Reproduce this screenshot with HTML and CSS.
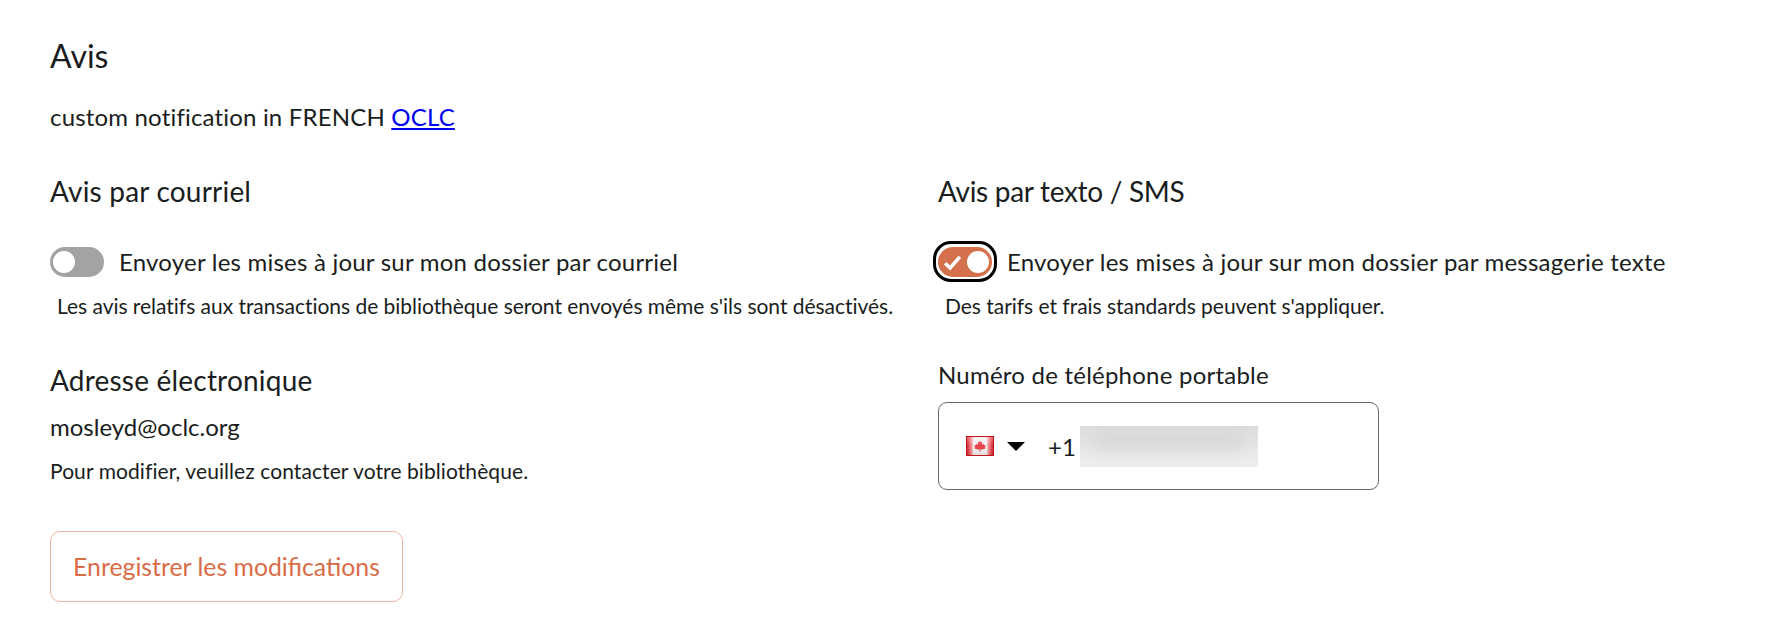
FILE: index.html
```html
<!DOCTYPE html>
<html lang="fr">
<head>
<meta charset="utf-8">
<title>Avis</title>
<link rel="stylesheet" href="styles.css">
</head>
<body>
<main class="page">
  <h2 class="title">Avis</h2>
  <p class="custom">custom notification in FRENCH <a href="#">OCLC</a></p>
  <div class="columns">
    <section class="col">
      <h3 class="subtitle">Avis par courriel</h3>
      <div class="toggle-row">
        <span class="switch-wrap"><span class="switch off"><span class="knob"></span></span></span>
        <span class="toggle-label">Envoyer les mises à jour sur mon dossier par courriel</span>
      </div>
      <p class="note">Les avis relatifs aux transactions de bibliothèque seront envoyés même s'ils sont désactivés.</p>
      <h3 class="subtitle address">Adresse électronique</h3>
      <p class="email">mosleyd@oclc.org</p>
      <p class="hint">Pour modifier, veuillez contacter votre bibliothèque.</p>
      <button class="save" type="button">Enregistrer les modifications</button>
    </section>
    <section class="col">
      <h3 class="subtitle sms">Avis par texto / SMS</h3>
      <div class="toggle-row">
        <span class="switch-wrap focus"><span class="switch on">
          <svg class="check" viewBox="0 0 16 14" aria-hidden="true"><path d="M1.8 7.6 6 11.6 14.2 2.2" fill="none" stroke="#fff" stroke-width="3"/></svg>
          <span class="knob"></span></span></span>
        <span class="toggle-label">Envoyer les mises à jour sur mon dossier par messagerie texte</span>
      </div>
      <p class="note">Des tarifs et frais standards peuvent s'appliquer.</p>
      <label class="phone-label">Numéro de téléphone portable</label>
      <div class="phone">
        <svg class="flag" viewBox="0 0 28 20" aria-hidden="true">
          <defs>
            <linearGradient id="shade" x1="0" y1="0" x2="0" y2="1"><stop offset="0" stop-color="#fff" stop-opacity=".3"/><stop offset=".5" stop-color="#fff" stop-opacity="0"/><stop offset="1" stop-color="#000" stop-opacity=".1"/></linearGradient>
            <linearGradient id="band" x1="0" y1="0" x2="1" y2="0"><stop offset="0" stop-color="#c9141f"/><stop offset=".6" stop-color="#ef6a70"/><stop offset="1" stop-color="#f6c4c6"/></linearGradient>
            <linearGradient id="bandr" x1="1" y1="0" x2="0" y2="0"><stop offset="0" stop-color="#c9141f"/><stop offset=".6" stop-color="#ef6a70"/><stop offset="1" stop-color="#f6c4c6"/></linearGradient>
          </defs>
          <rect width="28" height="20" fill="#f4eeee"/>
          <rect width="7" height="20" fill="url(#band)"/>
          <rect x="21" width="7" height="20" fill="url(#bandr)"/>
          <path d="M14 4.5 15 6.6 16.4 6 16 9 17.6 8 18.6 9.6 19.8 9.4 19 11.6 19.6 12.4 16 13.6 14.4 13.4 14.4 16 13.6 16 13.6 13.4 12 13.6 8.4 12.4 9 11.6 8.2 9.4 9.4 9.6 10.4 8 12 9 11.6 6 13 6.6Z" fill="#e8404a"/>
          <rect width="28" height="20" fill="url(#shade)"/>
          <rect x=".5" y=".5" width="27" height="19" fill="none" stroke="#c0141f"/>
        </svg>
        <span class="caret"></span>
        <span class="dial">+1</span>
        <span class="blurred"><span class="smear"></span></span>
      </div>
    </section>
  </div>
</main>
</body>
</html>
```
FILE: styles.css
```css
* { box-sizing: border-box; }
html, body { margin: 0; background: #fff; }
body { font-family: "Lato", "Liberation Sans", sans-serif; color: #1a1d20; }
.page { padding: 34px 50px 0; }
.title { margin: 0; font-size: 32px; font-weight: 400; line-height: 44px; }
.custom { margin: 23px 0 0; font-size: 24px; line-height: 32px; letter-spacing: .18px; }
.custom a { color: #0000ee; text-decoration: underline; }
.columns { display: grid; grid-template-columns: 888px 1fr; margin-top: 40px; }
.col { min-width: 0; display: flex; flex-direction: column; align-items: flex-start; }
.subtitle { margin: 0; font-size: 28px; font-weight: 400; line-height: 36px; letter-spacing: .2px; }
.subtitle.sms { letter-spacing: -.3px; }
.toggle-row { display: flex; align-items: center; margin-top: 38px; height: 30px; }
.switch-wrap { display: block; width: 54px; height: 30px; flex: none; margin-right: 15px; position: relative; }
.switch { display: block; width: 54px; height: 30px; border-radius: 15px; position: relative; }
.switch.off { background: #a3a3a3; }
.switch.on { background: #d4704c; }
.knob { position: absolute; top: 4px; width: 22px; height: 22px; border-radius: 50%; background: #fff; }
.off .knob { left: 3px; }
.on .knob { right: 3px; }
.focus::after { content: ""; position: absolute; inset: -6px -5px -5px -5px; border: 3px solid #000; border-radius: 18px; }
.check { position: absolute; left: 5px; top: 7px; width: 19px; height: 17px; }
.toggle-label { font-size: 24px; line-height: 30px; letter-spacing: .22px; }
.note { margin: 14px 0 0 7px; font-size: 21px; line-height: 30px; letter-spacing: -.03px; }
.address { margin-top: 41px; }
.email { margin: 14px 0 0; font-size: 24px; line-height: 30px; }
.hint { margin: 14px 0 0; font-size: 21px; line-height: 30px; letter-spacing: .08px; }
.save { margin-top: 45px; width: 353px; height: 71px; padding: 0; background: #fff; border: 1px solid #eeb4a0; border-radius: 10px; color: #d96c47; font: 400 24.8px "Lato", "Liberation Sans", sans-serif; }
.phone-label { display: block; margin-top: 38px; font-size: 24px; line-height: 32px; letter-spacing: .23px; }
.phone { display: flex; align-items: center; width: 441px; height: 88px; margin-top: 11px; padding-left: 27px; border: 1px solid #5f6a72; border-radius: 9px; }
.flag { width: 28px; height: 20px; flex: none; }
.caret { width: 0; height: 0; margin-left: 13px; border-left: 9px solid transparent; border-right: 9px solid transparent; border-top: 9px solid #000; }
.dial { margin-left: 23px; font-size: 24px; }
.blurred { display: block; position: relative; overflow: hidden; width: 178px; height: 41px; margin-left: 4px; background: linear-gradient(#dcdcdc, #efefef); }
.smear { position: absolute; left: 14px; right: 14px; top: 8px; height: 14px; background: #d6d6d6; filter: blur(7px); }
```
